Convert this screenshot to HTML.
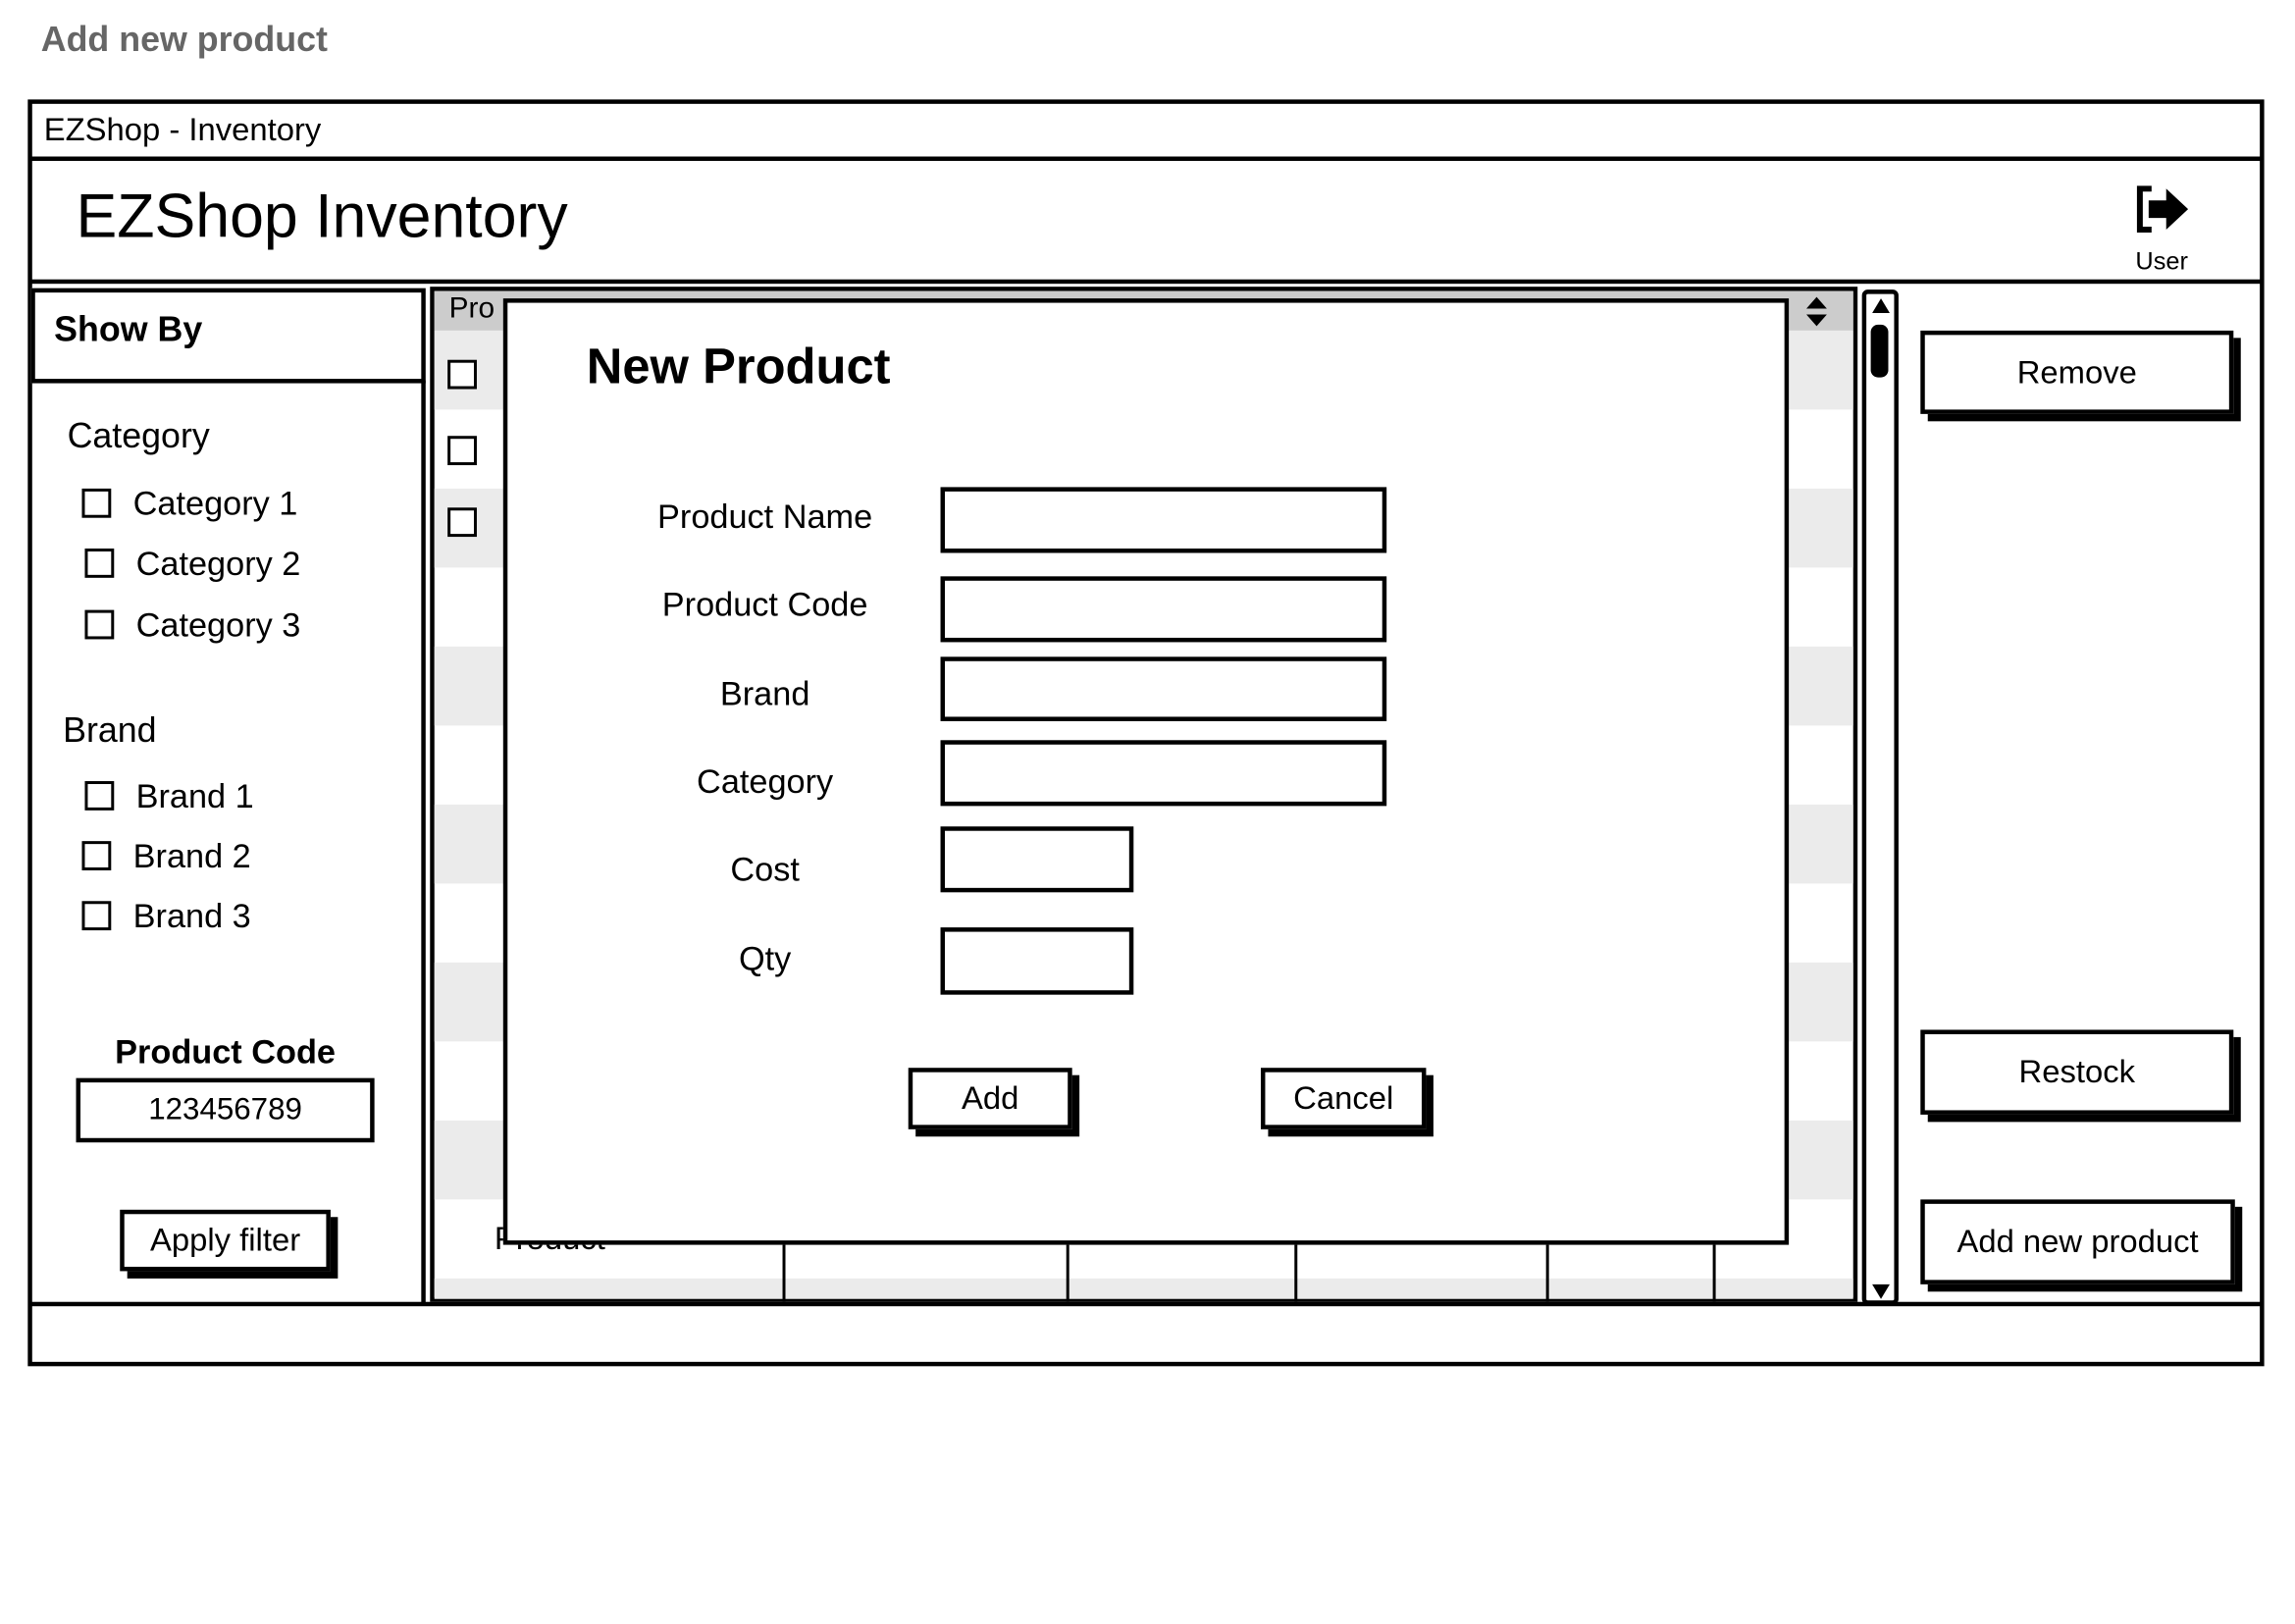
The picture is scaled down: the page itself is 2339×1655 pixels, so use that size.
<!DOCTYPE html>
<html><head><meta charset="utf-8"><style>
*{margin:0;padding:0;box-sizing:border-box}
html,body{width:2339px;height:1654px;background:#fff;overflow:hidden}
#s{position:absolute;left:0;top:0;width:1570px;height:1110px;transform:scale(1.4907);transform-origin:0 0;font-family:"Liberation Sans",sans-serif;color:#000}
.a{position:absolute}
.b{position:absolute;border:3px solid #000;background:#fff}
.btn{position:absolute;border:3px solid #000;background:#fff;box-shadow:5px 5px 0 #000;text-align:center;font-size:22px}
.cb{position:absolute;width:20px;height:20px;border:2px solid #000;background:#fff}
.t{position:absolute;font-size:23px;white-space:nowrap}
.row{position:absolute;left:297px;width:970px;height:54px;background:#ebebeb}
.col{position:absolute;top:825px;height:65px;width:2px;background:#000}
</style></head><body><div id="s">
<div class="t" style="left:28px;top:14px;font-size:24px;font-weight:bold;color:#666">Add new product</div>
<div class="a" style="left:19px;top:68px;width:1529px;height:866px;border:3px solid #000"></div>
<div class="t" style="left:30px;top:76px;font-size:22px">EZShop - Inventory</div>
<div class="a" style="left:20px;top:107px;width:1527px;height:3px;background:#000"></div>
<div class="t" style="left:52px;top:124px;font-size:42px">EZShop Inventory</div>
<svg class="a" style="left:1459px;top:126px" width="40" height="34" viewBox="0 0 40 34"><path d="M12 3H4V31H12" fill="none" stroke="#000" stroke-width="4"/><path d="M10 11H22V3L37 17L22 31V23H10Z" fill="#000"/></svg>
<div class="t" style="left:1460px;top:169px;font-size:17px">User</div>
<div class="a" style="left:20px;top:191px;width:1527px;height:3px;background:#000"></div>
<div class="b" style="left:21px;top:197px;width:270px;height:65px"></div>
<div class="t" style="left:37px;top:212px;font-weight:bold;font-size:24px">Show By</div>
<div class="a" style="left:288px;top:260px;width:3px;height:632px;background:#000"></div>
<div class="t" style="left:46px;top:285px;font-size:24px">Category</div>
<div class="cb" style="left:56px;top:334px"></div><div class="t" style="left:91px;top:331px">Category 1</div>
<div class="cb" style="left:58px;top:375px"></div><div class="t" style="left:93px;top:372px">Category 2</div>
<div class="cb" style="left:58px;top:417px"></div><div class="t" style="left:93px;top:414px">Category 3</div>
<div class="t" style="left:43px;top:486px;font-size:24px">Brand</div>
<div class="cb" style="left:58px;top:534px"></div><div class="t" style="left:93px;top:531px">Brand 1</div>
<div class="cb" style="left:56px;top:575px"></div><div class="t" style="left:91px;top:572px">Brand 2</div>
<div class="cb" style="left:56px;top:616px"></div><div class="t" style="left:91px;top:613px">Brand 3</div>
<div class="t" style="left:54px;top:706px;width:200px;text-align:center;font-weight:bold">Product Code</div>
<div class="b" style="left:52px;top:737px;width:204px;height:44px;font-size:21px;text-align:center;line-height:38px">123456789</div>
<div class="btn" style="left:82px;top:827px;width:144px;height:42px;line-height:36px">Apply filter</div>
<div class="a" style="left:294px;top:196px;width:976px;height:694px;border:3px solid #000;background:#fff"></div>
<div class="a" style="left:297px;top:199px;width:970px;height:27px;background:#ccc"></div>
<div class="row" style="top:226px"></div><div class="row" style="top:334px"></div><div class="row" style="top:442px"></div><div class="row" style="top:550px"></div><div class="row" style="top:658px"></div><div class="row" style="top:766px"></div><div class="row" style="top:874px;height:14px"></div>
<div class="t" style="left:307px;top:200px;font-size:20px">Pro</div>
<div class="cb" style="left:306px;top:246px"></div><div class="cb" style="left:306px;top:298px"></div><div class="cb" style="left:306px;top:347px"></div>
<div class="col" style="left:535px"></div><div class="col" style="left:729px"></div><div class="col" style="left:885px"></div><div class="col" style="left:1057px"></div><div class="col" style="left:1171px"></div>
<div class="t" style="left:338px;top:834px;font-size:22px">Product</div>
<svg class="a" style="left:1234px;top:202px" width="16" height="22"><path d="M1 9L8 1L15 9Z M1 13L8 21L15 13Z" fill="#000"/></svg>
<div class="a" style="left:1273px;top:198px;width:25px;height:694px;border:3px solid #000;border-radius:4px;background:#fff"></div>
<svg class="a" style="left:1278px;top:202px" width="16" height="14"><path d="M2 12L8 2L14 12Z" fill="#000"/></svg>
<div class="a" style="left:1279px;top:222px;width:12px;height:36px;background:#000;border-radius:5px"></div>
<svg class="a" style="left:1278px;top:876px" width="16" height="14"><path d="M2 2L8 12L14 2Z" fill="#000"/></svg>
<div class="btn" style="left:1313px;top:226px;width:214px;height:57px;line-height:51px">Remove</div>
<div class="btn" style="left:1313px;top:704px;width:214px;height:58px;line-height:52px">Restock</div>
<div class="btn" style="left:1313px;top:820px;width:215px;height:58px;line-height:52px">Add new product</div>
<div class="a" style="left:20px;top:890px;width:1527px;height:3px;background:#000"></div>
<div class="a" style="left:344px;top:204px;width:879px;height:647px;border:3px solid #000;background:#fff"></div>
<div class="t" style="left:401px;top:232px;font-size:34px;font-weight:bold">New Product</div>
<div class="t" style="left:423px;top:340px;width:200px;text-align:center">Product Name</div>
<div class="t" style="left:423px;top:400px;width:200px;text-align:center">Product Code</div>
<div class="t" style="left:423px;top:461px;width:200px;text-align:center">Brand</div>
<div class="t" style="left:423px;top:521px;width:200px;text-align:center">Category</div>
<div class="t" style="left:423px;top:581px;width:200px;text-align:center">Cost</div>
<div class="t" style="left:423px;top:642px;width:200px;text-align:center">Qty</div>
<div class="b" style="left:643px;top:333px;width:305px;height:45px"></div>
<div class="b" style="left:643px;top:394px;width:305px;height:45px"></div>
<div class="b" style="left:643px;top:449px;width:305px;height:44px"></div>
<div class="b" style="left:643px;top:506px;width:305px;height:45px"></div>
<div class="b" style="left:643px;top:565px;width:132px;height:45px"></div>
<div class="b" style="left:643px;top:634px;width:132px;height:46px"></div>
<div class="btn" style="left:621px;top:730px;width:112px;height:42px;line-height:36px">Add</div>
<div class="btn" style="left:862px;top:730px;width:113px;height:42px;line-height:36px">Cancel</div>
</div></body></html>
